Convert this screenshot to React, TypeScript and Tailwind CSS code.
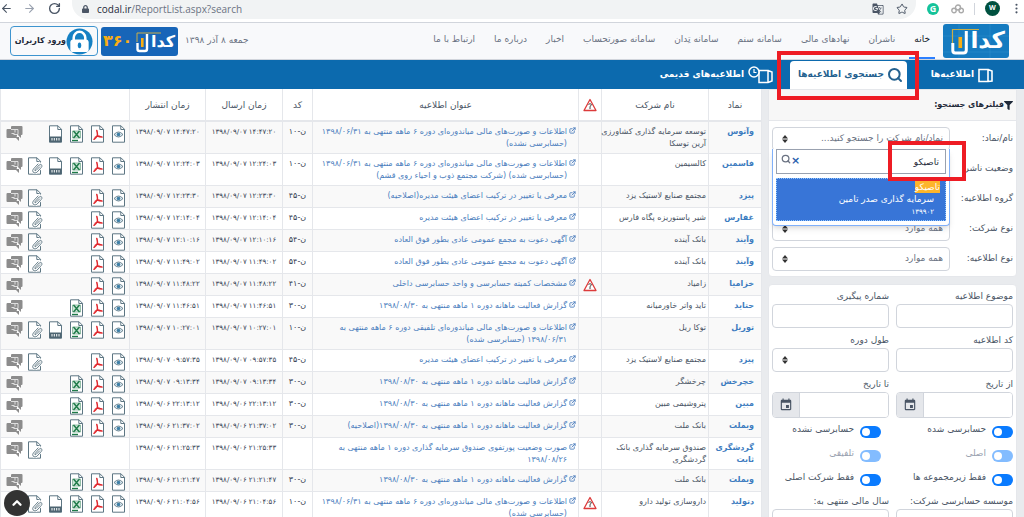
import React, { useState } from 'react';
import { ArrowLeft, ArrowRight, RotateCw, Search, Star, MoreVertical, ChevronUp, ExternalLink } from 'lucide-react';
import { FaLock, FaFilter } from 'react-icons/fa';
import { MdEvent, MdGTranslate } from 'react-icons/md';

type Icon = 'chat' | 'clip' | 'ruler' | 'excel' | 'pdf' | 'eye';

interface Report {
    symbol: string;
    company: string;
    title: string;
    code: string;
    time: string;
    icons: Icon[];
    alert?: boolean;
}

const iconOrder: Icon[] = ['chat', 'clip', 'ruler', 'excel', 'pdf', 'eye'];
const all: Icon[] = iconOrder;
const attach: Icon[] = ['chat', 'clip', 'pdf', 'eye'];
const sheet: Icon[] = ['chat', 'excel', 'pdf', 'eye'];

const monthly = 'گزارش فعالیت ماهانه دوره ۱ ماهه منتهی به ۱۳۹۸/۰۸/۳۰';
const interim = 'اطلاعات و صورت‌های مالی میاندوره‌ای دوره ۶ ماهه منتهی به ۱۳۹۸/۰۶/۳۱';
const board = 'معرفی یا تغییر در ترکیب اعضای هیئت مدیره';
const meeting = 'آگهی دعوت به مجمع عمومی عادی بطور فوق العاده';

const reports: Report[] = [
    { symbol: 'وآتوس', company: 'توسعه سرمایه گذاری کشاورزی\nآرین توسکا', title: interim + '\n(حسابرسی نشده)', code: 'ن-۱۰', time: '۱۳۹۸/۰۹/۰۷ ۱۴:۴۷:۲۰', icons: ['chat', 'ruler', 'excel', 'pdf', 'eye'] },
    { symbol: 'فاسمین', company: 'کالسیمین', title: interim + '\n(حسابرسی شده) (شرکت مجتمع ذوب و احیاء روی قشم)', code: 'ن-۱۰', time: '۱۳۹۸/۰۹/۰۷ ۱۲:۲۴:۰۳', icons: all },
    { symbol: 'پیزد', company: 'مجتمع صنایع لاستیک یزد', title: board + '(اصلاحیه)', code: 'ن-۴۵', time: '۱۳۹۸/۰۹/۰۷ ۱۲:۲۳:۳۰', icons: attach },
    { symbol: 'غفارس', company: 'شیر پاستوریزه پگاه فارس', title: board, code: 'ن-۴۵', time: '۱۳۹۸/۰۹/۰۷ ۱۲:۱۴:۰۴', icons: attach },
    { symbol: 'وآیند', company: 'بانک آینده', title: meeting, code: 'ن-۵۴', time: '۱۳۹۸/۰۹/۰۷ ۱۲:۱۰:۱۶', icons: attach },
    { symbol: 'وآیند', company: 'بانک آینده', title: meeting, code: 'ن-۵۴', time: '۱۳۹۸/۰۹/۰۷ ۱۱:۴۹:۰۲', icons: attach },
    { symbol: 'خزامیا', company: 'زامیاد', title: 'مشخصات کمیته حسابرسی و واحد حسابرسی داخلی', code: 'ن-۴۱', time: '۱۳۹۸/۰۹/۰۷ ۱۱:۴۸:۲۲', icons: ['chat', 'pdf', 'eye'], alert: true },
    { symbol: 'حتاید', company: 'تاید واتر خاورمیانه', title: monthly, code: 'ن-۳۰', time: '۱۳۹۸/۰۹/۰۷ ۱۱:۴۶:۵۱', icons: sheet },
    { symbol: 'توریل', company: 'توکا ریل', title: 'اطلاعات و صورت‌های مالی میاندوره‌ای تلفیقی دوره ۶ ماهه منتهی به\n۱۳۹۸/۰۶/۳۱ (حسابرسی شده)', code: 'ن-۱۰', time: '۱۳۹۸/۰۹/۰۷ ۱۰:۲۷:۰۱', icons: all },
    { symbol: 'پیزد', company: 'مجتمع صنایع لاستیک یزد', title: board, code: 'ن-۴۵', time: '۱۳۹۸/۰۹/۰۷ ۰۹:۵۷:۳۵', icons: attach },
    { symbol: 'خچرخش', company: 'چرخشگر', title: monthly, code: 'ن-۳۰', time: '۱۳۹۸/۰۹/۰۷ ۰۹:۱۳:۳۴', icons: sheet },
    { symbol: 'مبین', company: 'پتروشیمی مبین', title: monthly, code: 'ن-۳۰', time: '۱۳۹۸/۰۹/۰۶ ۲۲:۱۳:۱۲', icons: sheet },
    { symbol: 'وبملت', company: 'بانک ملت', title: monthly + '(اصلاحیه)', code: 'ن-۳۰', time: '۱۳۹۸/۰۹/۰۶ ۲۱:۳۷:۰۲', icons: sheet },
    { symbol: 'گردشگری\nثابت', company: 'صندوق سرمایه گذاری بانک\nگردشگری', title: 'صورت وضعیت پورتفوی صندوق سرمایه گذاری دوره ۱ ماهه منتهی به\n۱۳۹۸/۰۸/۲۶', code: '', time: '۱۳۹۸/۰۹/۰۶ ۲۱:۲۵:۳۳', icons: ['chat', 'clip'] },
    { symbol: 'وبملت', company: 'بانک ملت', title: monthly, code: 'ن-۳۰', time: '۱۳۹۸/۰۹/۰۶ ۲۱:۲۱:۴۷', icons: sheet },
    { symbol: 'دتولید', company: 'داروسازی تولید دارو', title: interim + '\n(حسابرسی شده)', code: 'ن-۱۰', time: '۱۳۹۸/۰۹/۰۶ ۲۱:۰۴:۵۶', icons: all, alert: true },
];

const ReportIcon = ({ type }: { type: Icon }) => {
    if (type === 'chat') {
        return (
            <svg viewBox="0 0 17 17" className="h-[17px] w-[17px]">
                <path d="M6 1h9.500q1 0 1 1v7q0 1-1 1H15v3l-3-3H6q-1 0-1-1V2q0-1 1-1z" fill="#8c8c8c" />
                <path d="M1.500 4H10q1 0 1 1v6q0 1-1 1h3v4l-3-3H1.500q-1 0-1-1V5q0-1 1-1z" fill="#8c8c8c" />
                <path d="M5 4.500h7v5H7.500M9 5v2.500M5.500 8.500h3" fill="none" stroke="#e8e8e8" strokeWidth="0.900" />
            </svg>
        );
    }
    return (
        <svg viewBox="0 0 16 18" className="h-[18px] w-[16px]">
            <path d="M1.500 .8h8.500l3.500 3.500v12.900h-12z" fill="#fff" stroke="#5d7683" strokeWidth="1" />
            <path d="M9.800 .8v3.700h3.700" fill="none" stroke="#5d7683" strokeWidth="1" />
            {type === 'eye' && (
                <>
                    <path d="M3 9.500q4.500-5 9 0q-4.500 5-9 0z" fill="#dce8ee" stroke="#4a6a7a" strokeWidth=".8" />
                    <circle cx="7.500" cy="9.500" r="1.800" fill="#3f7fa6" />
                </>
            )}
            {type === 'pdf' && (
                <>
                    <path d="M6.800 5.500q1.200 4.500.2 5.600q-1 1.800-3 3.200M7 10.800q2.500 1.200 5 1.300" fill="none" stroke="#e0282e" strokeWidth="1.500" strokeLinecap="round" />
                    <path d="M4.500 12.300q2.500-1.300 5.500-1" fill="none" stroke="#e0282e" strokeWidth="1" />
                </>
            )}
            {type === 'excel' && (
                <>
                    <path d="M3.500 6h8v7h-8z" fill="#cfe6d9" stroke="#5b9c78" strokeWidth=".6" />
                    <path d="M4.500 6l6 7M10.500 6l-6 7" fill="none" stroke="#1e7a48" strokeWidth="1.400" />
                    <path d="M3 15.500h6" stroke="#1e7a48" strokeWidth="1.400" />
                </>
            )}
            {type === 'ruler' && (
                <>
                    <path d="M1.500 11.500h12v5.700h-12z" fill="#4d6471" />
                    <path d="M4 13v2.500M6.300 13v2.500M8.700 13v2.500M11 13v2.500" stroke="#fff" strokeWidth="1" />
                </>
            )}
            {type === 'clip' && (
                <>
                    <path d="M13.500 5.500L7 12.500q-1 3 1.800 2.800l6-6.200" stroke="#fff" strokeWidth="3.500" fill="none" />
                    <path d="M13 9.500l-4 4q-1.200.7-1.300-.5l4.500-5q1.800-1.500 2.700.3q.3 1-.5 2l-4.500 5q-2 1.500-3.600 0q-1.300-1.600 0-3.200l5-5.400" stroke="#6b818c" strokeWidth="1" fill="none" />
                </>
            )}
        </svg>
    );
};

const AlertIcon = () => (
    <svg viewBox="0 0 14 14" className="mx-auto h-[14px] w-[14px]">
        <path d="M7 1.500L13 12.500H1z" fill="#fff" stroke="#dc3b3b" strokeWidth="1.300" strokeLinejoin="round" />
        <path d="M5.500 6.500q1.500-1.700 3 0q0 1-1.500 1.800V11" fill="none" stroke="#444" strokeWidth="1" />
    </svg>
);

const SortIcon = () => (
    <svg viewBox="0 0 6 8" className="pointer-events-none absolute left-[10px] top-2 h-[8px] w-[6px]">
        <path d="M3 0l3 3.400H0zM3 8l3-3.400H0z" fill="#333" />
    </svg>
);

const BookIcon = () => (
    <svg viewBox="0 0 15 15" className="h-[15px] w-[15px]">
        <path d="M1 1.500h9v12H1zM10 1.500l4 1.500v10l-4 .5" fill="none" stroke="#fff" strokeWidth="1.600" />
    </svg>
);

const Select = ({ id, text }: { id: string; text: string }) => (
    <div className="relative w-full">
        <select id={id} className="block h-6 w-full appearance-none rounded border border-gray-300 bg-white pr-[6px] text-[9px] text-gray-500">
            <option>{text}</option>
        </select>
        <SortIcon />
    </div>
);

const filters = [
    { id: 'symbol', label: 'نام/نماد:', text: 'نماد/نام شرکت را جستجو کنید...' },
    { id: 'status', label: 'وضعیت ناشر:', text: 'همه موارد' },
    { id: 'group', label: 'گروه اطلاعیه:', text: 'همه موارد' },
    { id: 'companyType', label: 'نوع شرکت:', text: 'همه موارد' },
    { id: 'letterType', label: 'نوع اطلاعیه:', text: 'همه موارد' },
];

const switches = [
    { id: 'audited', label: 'حسابرسی شده' },
    { id: 'notAudited', label: 'حسابرسی نشده' },
    { id: 'main', label: 'اصلی', disabled: true },
    { id: 'consolidated', label: 'تلفیقی', disabled: true },
    { id: 'childs', label: 'فقط زیرمجموعه ها' },
    { id: 'mainOnly', label: 'فقط شرکت اصلی' },
];

const navItems = ['خانه', 'ناشران', 'نهادهای مالی', 'سامانه سنم', 'سامانه تِدان', 'سامانه صورتحساب', 'اخبار', 'درباره ما', 'ارتباط با ما'];

const Field = ({ id, label, children }: { id: string; label: string; children: React.ReactNode }) => (
    <div>
        <label htmlFor={id} className="block h-[14px] text-[9px] leading-[12px] text-gray-600">{label}</label>
        {children}
    </div>
);

const inputClass = 'block h-6 w-full rounded border border-gray-300 bg-white px-2 text-[9px]';

const DateInput = ({ id }: { id: string }) => (
    <div className="flex h-[26px] w-full overflow-hidden rounded border border-gray-300">
        <input id={id} className="min-w-0 flex-1 bg-white px-2 text-[9px]" />
        <button type="button" aria-label="تقویم" className="flex w-[27px] items-center justify-center border-r border-gray-300 bg-gray-200">
            <MdEvent className="h-[14px] w-[14px] text-gray-600" />
        </button>
    </div>
);

const BrowserBar = () => (
    <div dir="ltr" className="flex h-[23px] items-start border-b border-gray-300 bg-white font-['Open_Sans',sans-serif]">
        <div className="flex h-[17px] w-[72px] shrink-0 items-center">
            <ArrowLeft className="h-[13px] w-[13px] text-gray-600" />
            <ArrowRight className="ml-[10px] h-[13px] w-[13px] text-gray-400" />
            <RotateCw className="ml-[12px] h-[13px] w-[13px] text-gray-600" strokeWidth={2.5} />
        </div>
        <div className="flex h-[19px] flex-1 items-center rounded-b-2xl bg-[#f1f3f4] pb-[2px] pl-[10px] pr-2">
            <FaLock className="h-[8px] w-[7px] text-gray-600" />
            <span className="ml-[8px] flex-1 text-[10px] leading-[14px] text-gray-500"><span className="text-gray-800">codal.ir</span>/ReportList.aspx?search</span>
            <MdGTranslate className="h-[12px] w-[12px] text-gray-600" />
            <Star className="ml-[12px] h-[12px] w-[12px] text-gray-600" />
        </div>
        <div className="flex h-[17px] shrink-0 items-center pl-[11px]">
            <span className="flex h-[12px] w-[12px] items-center justify-center rounded-full bg-[#15c39a] text-[9px] font-bold leading-none text-white">G</span>
            <svg viewBox="0 0 13 10" className="ml-3 h-[10px] w-[13px]" fill="none" stroke="#aaa" strokeWidth="1.400">
                <circle cx="3" cy="6.500" r="2.200" />
                <circle cx="7" cy="3.500" r="2.500" />
                <circle cx="10.200" cy="6.500" r="2.200" />
            </svg>
            <span className="ml-[10px] h-3 w-px bg-gray-300" />
            <span className="ml-[10px] flex h-[15px] w-[15px] items-center justify-center rounded-full bg-[#00513f] text-[7px] font-bold text-white">W</span>
            <MoreVertical className="ml-[10px] mr-px h-[13px] w-[13px] text-gray-600" />
        </div>
    </div>
);

const CodalLogo = () => (
    <svg viewBox="0 0 66 34" className="h-[34px] w-[66px]">
        <rect width="66" height="34" rx="3" fill="#157bc0" />
        <path d="M16 0v34M47 0v34M0 12h66M0 28h66" stroke="#3290cf" strokeWidth=".5" />
        <path d="M9.500 20V5.500H36" fill="none" stroke="#c9ae48" strokeWidth="1.200" />
        <path d="M9.800 19v7.500q0 2.500 2.500 2.500h8q3 0 3-3V7" fill="none" stroke="#fff" strokeWidth="3" />
        <rect x="15.500" y="13" width="3.600" height="11" fill="#f9ae14" />
        <text x="62" y="24" direction="rtl" fill="#fff" fontSize="23" fontWeight="bold" fontFamily="DejaVu Sans">كدا</text>
    </svg>
);

const Codal360Logo = () => (
    <svg viewBox="0 0 77 29" className="h-[29px] w-[77px]">
        <rect width="77" height="29" rx="3" fill="#1765b8" />
        <path d="M36 15V6h24" fill="none" stroke="#c9ae48" strokeWidth="1" />
        <path d="M36.500 16v6q0 2 2 2h5.500q2 0 2-2V7" fill="none" stroke="#fff" strokeWidth="2.400" />
        <rect x="40" y="11" width="2.600" height="9" fill="#f9ae14" />
        <text x="74" y="20" direction="rtl" fill="#fff" fontSize="16" fontWeight="bold" fontFamily="DejaVu Sans">كدا</text>
        <text x="2" y="19" direction="ltr" fill="#f9ae14" fontSize="16" fontWeight="bold" fontFamily="DejaVu Sans">۳۶۰</text>
    </svg>
);

const App = () => {
    const [query, setQuery] = useState('تاصیکو');

    return (
        <div dir="rtl" className="h-screen overflow-hidden bg-[#e9ebee] font-['DejaVu_Sans',sans-serif] text-gray-700">
            <BrowserBar />

            <header className="flex h-[37px] items-center border-b border-gray-300 bg-[#f8f9fb] pl-[10px] pr-[15px]">
                <a href="#home" aria-label="کدال"><CodalLogo /></a>
                <nav className="flex h-full flex-1 items-center gap-[9px] pr-[8px] text-[9px]">
                    {navItems.map((item, i) => (
                        <a
                            key={item}
                            href="#nav"
                            className={`flex h-[35px] items-center whitespace-nowrap border-b-2 px-[5px] ${i === 0 ? 'border-blue-500 text-gray-900' : 'border-transparent text-gray-500'}`}
                        >
                            {item}
                        </a>
                    ))}
                </nav>
                <span className="ml-[7px] whitespace-nowrap text-[9px] text-gray-500">جمعه ۸ آذر ۱۳۹۸</span>
                <a href="#360" aria-label="کدال ۳۶۰"><Codal360Logo /></a>
                <button className="mr-[3px] flex h-[30px] w-[88px] items-center justify-between rounded border border-[#3d94cf] px-[4px] text-[8px] font-bold text-gray-800">
                    <svg viewBox="0 0 28 28" className="h-[27px] w-[27px] shrink-0">
                        <circle cx="14" cy="14" r="13.500" fill="#1580c3" />
                        <path d="M8 14v-4a6 6 0 0 1 12 0v4" fill="none" stroke="#fff" strokeWidth="2.600" />
                        <rect x="4.500" y="12" width="19" height="13" rx="3" fill="#fff" />
                        <ellipse cx="14" cy="18" rx="1.800" ry="3" fill="#1580c3" />
                    </svg>
                    <span className="whitespace-nowrap">ورود کاربران</span>
                </button>
            </header>

            {/* Tabs */}
            <div className="flex h-[29px] items-end bg-[#0c6aae] pr-[31px] text-[9px] font-bold text-white">
                <a href="#reports" className="flex h-[28px] w-[86px] items-center gap-1">
                    <BookIcon />
                    اطلاعیه‌ها
                </a>
                <div className="relative flex h-[28px] w-[117px] items-center rounded-t bg-white pr-[4px] text-[#24618f]">
                    <a href="#search" className="flex items-center gap-[3px] whitespace-nowrap">
                        <Search className="h-[16px] w-[16px]" strokeWidth={3} />
                        جستجوی اطلاعیه‌ها
                    </a>
                    <div className="pointer-events-none absolute -bottom-[11px] -left-[13px] -right-[12px] -top-[10px] z-20 border-4 border-[#ee1c24]" />
                </div>
                <a href="#old" className="mr-[17px] flex h-[28px] items-center gap-1 whitespace-nowrap">
                    <svg viewBox="0 0 25 18" className="h-[18px] w-[25px]">
                        <path d="M11 4.500h9v12h-9zM20 4.500l4 1.500v9l-4 1.500" fill="none" stroke="#fff" strokeWidth="1.500" />
                        <circle cx="6" cy="6" r="5" fill="#0c6aae" stroke="#fff" strokeWidth="1.500" />
                        <path d="M6 3v3.500h2.500" fill="none" stroke="#fff" strokeWidth="1.200" />
                    </svg>
                    اطلاعیه‌های قدیمی
                </a>
            </div>

            <main className="flex items-start gap-[6px] pr-[7px]">
                <aside className="w-[249px] shrink-0">
                    <section className="rounded-b border border-gray-200 bg-white pb-[5px]">
                        <h2 className="flex h-[31px] items-center border-b border-gray-200 bg-[#f7f7f7] pr-[3px] text-[8px] font-bold text-gray-800">
                            <FaFilter className="h-[9px] w-[9px]" />
                            فیلترهای جستجو:
                        </h2>
                        <div className="relative flex flex-col gap-[6px] px-[3px] pt-[6px]">
                            {filters.map((f) => (
                                <div key={f.id} className="flex items-center">
                                    <label htmlFor={f.id} className="w-[63px] shrink-0 whitespace-nowrap text-[9px] text-gray-600">{f.label}</label>
                                    <Select id={f.id} text={f.text} />
                                </div>
                            ))}
                            {/* Search popup */}
                            <div className="absolute left-[3px] right-[66px] top-[28px] z-10 rounded-b border border-t-0 border-[#80b0fa] bg-white px-[3px] pb-[4px] shadow-md">
                                <div className="relative">
                                    <input
                                        aria-label="جستجوی نماد"
                                        value={query}
                                        onChange={(e) => setQuery(e.target.value)}
                                        className="block h-[25px] w-full border border-gray-400 pr-[6px] text-[9px] text-gray-800 outline-none"
                                    />
                                    <Search className="absolute left-[5px] top-[5px] h-[10px] w-[10px] text-gray-500" strokeWidth={3} />
                                    <button type="button" aria-label="پاک کردن" className="absolute left-[15px] top-[6px] text-[11px] font-bold leading-[12px] text-[#2b5fae]" onClick={() => setQuery('')}>×</button>
                                    <div className="pointer-events-none absolute -right-[20px] -top-[8px] h-[40px] w-[78px] border-4 border-[#ee1c24]" />
                                </div>
                                <div className="mt-1 flex h-[43px] flex-col items-start border border-dotted border-blue-300 bg-[#3875d7] pr-[5px] pt-[2px] text-[9px] text-white">
                                    <span className="bg-[#fdb52b] leading-[12px]">تاصیکو</span>
                                    <span className="pr-[6px] leading-[13px]">سرمایه گذاری صدر تامین</span>
                                    <span className="pr-[6px] text-[7px] leading-[12px]">۱۳۹۹۰۲</span>
                                </div>
                            </div>
                        </div>
                    </section>

                    <section className="mt-[7px] rounded-t border border-gray-200 bg-white px-[3px] pt-[5px]">
                        <div className="grid grid-cols-2 gap-x-[7px] gap-y-[6px]">
                            <Field id="subject" label="موضوع اطلاعیه"><input id="subject" className={inputClass} /></Field>
                            <Field id="tracing" label="شماره پیگیری"><input id="tracing" className={inputClass} /></Field>
                            <Field id="code" label="کد اطلاعیه"><input id="code" className={inputClass} /></Field>
                            <Field id="length" label="طول دوره"><Select id="length" text="" /></Field>
                            <Field id="from" label="از تاریخ"><DateInput id="from" /></Field>
                            <Field id="to" label="تا تاریخ"><DateInput id="to" /></Field>
                        </div>
                        <div className="mt-[5px] grid grid-cols-[132px_1fr] gap-y-[10px]">
                            {switches.map((s) => (
                                <div key={s.id} className="flex h-[14px] items-center gap-[6px]">
                                    <input
                                        type="checkbox"
                                        id={s.id}
                                        defaultChecked
                                        disabled={s.disabled}
                                        className="relative mt-1 h-[12px] w-[21px] shrink-0 appearance-none rounded-full bg-[#0a7bff] before:absolute before:left-[2px] before:top-[2px] before:h-[8px] before:w-[8px] before:rounded-full before:bg-white before:content-[''] disabled:opacity-50"
                                    />
                                    <label htmlFor={s.id} className={`whitespace-nowrap text-[9px] ${s.disabled ? 'text-gray-400' : 'text-gray-600'}`}>{s.label}</label>
                                </div>
                            ))}
                        </div>
                        <div className="mt-[10px] grid grid-cols-2 gap-x-[7px]">
                            <Field id="auditor" label="موسسه حسابرسی شرکت:"><input id="auditor" className={inputClass} /></Field>
                            <Field id="year" label="سال مالی منتهی به:"><input id="year" className={inputClass} /></Field>
                        </div>
                    </section>
                </aside>

                <div className="min-w-0 flex-1">
                    <table className="w-full table-fixed border-collapse bg-white text-[8px] leading-[12px]">
                        <colgroup>
                            <col className="w-[53px]" />
                            <col className="w-[107px]" />
                            <col className="w-[23px]" />
                            <col />
                            <col className="w-[30px]" />
                            <col className="w-[77px]" />
                            <col className="w-[76px]" />
                            <col className="w-[129px]" />
                        </colgroup>
                        <thead>
                            <tr className="h-[32px] border-b-2 border-gray-200 text-[9px] text-gray-600 *:border-x *:border-gray-200 *:font-normal">
                                <th>نماد</th>
                                <th>نام شرکت</th>
                                <th><AlertIcon /></th>
                                <th>عنوان اطلاعیه</th>
                                <th>کد</th>
                                <th>زمان ارسال</th>
                                <th>زمان انتشار</th>
                                <th></th>
                            </tr>
                        </thead>
                        <tbody>
                            {reports.map((r, i) => (
                                <tr key={i} className="h-[22px] border-b border-gray-200 align-top odd:bg-[#f9f9f9] *:border-x *:border-gray-200 *:pt-[4px]">
                                    <td className="whitespace-pre pr-[7px]"><a href="#symbol" className="font-bold text-[#3d7cc0]">{r.symbol}</a></td>
                                    <td className="whitespace-pre pr-[2px] text-gray-600">{r.company}</td>
                                    <td>{r.alert && <AlertIcon />}</td>
                                    <td className="pb-[3px] pr-[2px]">
                                        <a href="#letter" className="flex gap-[2px] whitespace-pre text-[#4a7dbd]">
                                            <ExternalLink className="mt-px h-[7px] w-[7px] shrink-0" strokeWidth={3} />
                                            {r.title}
                                        </a>
                                    </td>
                                    <td className="text-center">{r.code}</td>
                                    <td dir="ltr" className="whitespace-nowrap text-center text-[7px]">{r.time}</td>
                                    <td dir="ltr" className="whitespace-nowrap text-center text-[7px]">{r.time}</td>
                                    <td>
                                        <div dir="ltr" className="-mt-px flex h-[18px] pl-[5px]">
                                            {iconOrder.map((name) => (
                                                <span key={name} className="h-[18px] w-[21px] shrink-0">
                                                    {r.icons.includes(name) && <a href="#file" aria-label={name}><ReportIcon type={name} /></a>}
                                                </span>
                                            ))}
                                        </div>
                                    </td>
                                </tr>
                            ))}
                        </tbody>
                    </table>
                </div>
            </main>

            <button aria-label="بالا" className="fixed bottom-0 left-1 mb-px flex h-[26px] w-[26px] items-center justify-center rounded-full bg-[#333]">
                <ChevronUp className="h-[14px] w-[14px] text-white" strokeWidth={4} />
            </button>
        </div>
    );
};

export default App;
